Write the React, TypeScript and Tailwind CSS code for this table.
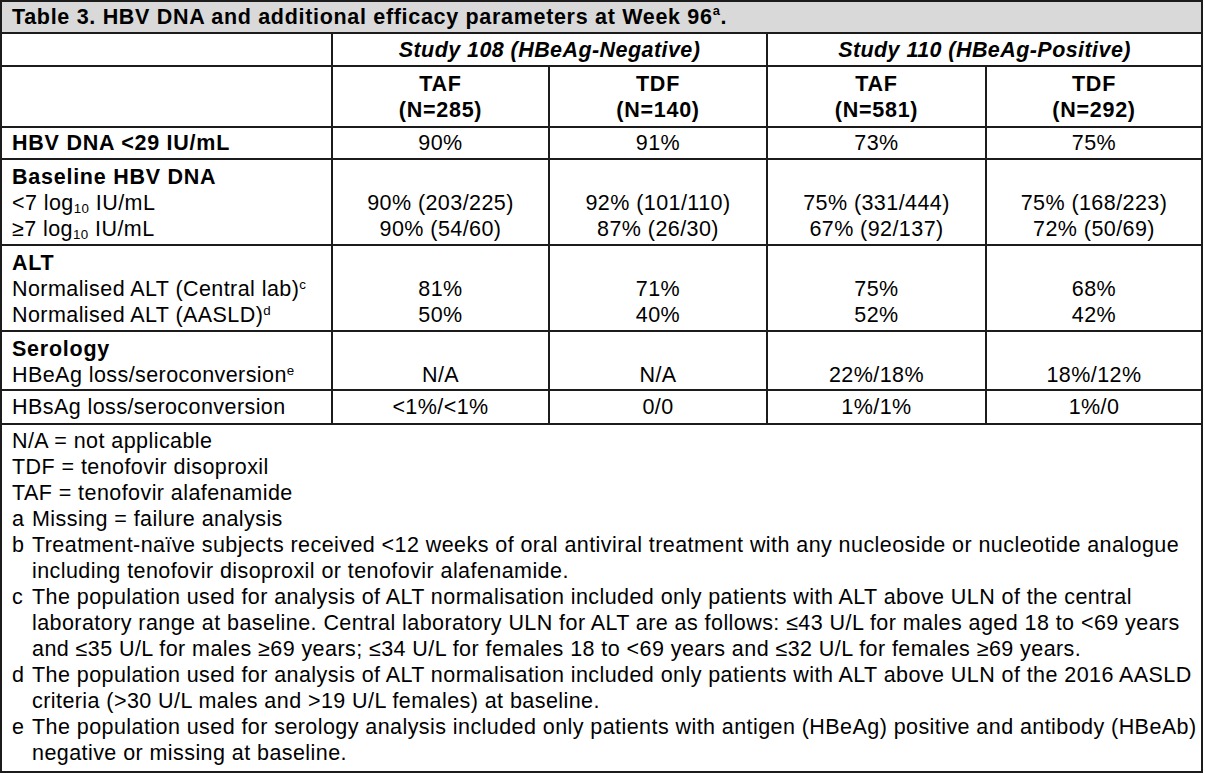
import type { ReactNode } from 'react'

const font = { fontFamily: '"Liberation Sans", Arial, sans-serif' }

type Row = {
  label: ReactNode[]
  values: string[][]
  height: string
}

const rows: Row[] = [
  {
    label: [<span className="font-bold tracking-[0.035em]">HBV DNA &lt;29 IU/mL</span>],
    values: [['90%'], ['91%'], ['73%'], ['75%']],
    height: 'single'
  },
  {
    label: [
      <span className="font-bold tracking-[0.035em]">Baseline HBV DNA</span>,
      <span>&lt;7 log<sub className="text-[0.62em]">10</sub> IU/mL</span>,
      <span>≥7 log<sub className="text-[0.62em]">10</sub> IU/mL</span>
    ],
    values: [
      ['', '90% (203/225)', '90% (54/60)'],
      ['', '92% (101/110)', '87% (26/30)'],
      ['', '75% (331/444)', '67% (92/137)'],
      ['', '75% (168/223)', '72% (50/69)']
    ],
    height: 'multi'
  },
  {
    label: [
      <span className="font-bold tracking-[0.035em]">ALT</span>,
      <span>Normalised ALT (Central lab)<sup className="text-[0.62em]">c</sup></span>,
      <span>Normalised ALT (AASLD)<sup className="text-[0.62em]">d</sup></span>
    ],
    values: [
      ['', '81%', '50%'],
      ['', '71%', '40%'],
      ['', '75%', '52%'],
      ['', '68%', '42%']
    ],
    height: 'multi'
  },
  {
    label: [
      <span className="font-bold tracking-[0.035em]">Serology</span>,
      <span>HBeAg loss/seroconversion<sup className="text-[0.62em]">e</sup></span>
    ],
    values: [
      ['', 'N/A'],
      ['', 'N/A'],
      ['', '22%/18%'],
      ['', '18%/12%']
    ],
    height: 'multi'
  },
  {
    label: [<span>HBsAg loss/seroconversion</span>],
    values: [['<1%/<1%'], ['0/0'], ['1%/1%'], ['1%/0']],
    height: 'single'
  }
]

const notes: { tag?: string; lines: string[] }[] = [
  { lines: ['N/A = not applicable'] },
  { lines: ['TDF = tenofovir disoproxil'] },
  { lines: ['TAF = tenofovir alafenamide'] },
  { tag: 'a', lines: ['Missing = failure analysis'] },
  {
    tag: 'b',
    lines: [
      'Treatment-naïve subjects received <12 weeks of oral antiviral treatment with any nucleoside or nucleotide analogue',
      'including tenofovir disoproxil or tenofovir alafenamide.'
    ]
  },
  {
    tag: 'c',
    lines: [
      'The population used for analysis of ALT normalisation included only patients with ALT above ULN of the central',
      'laboratory range at baseline. Central laboratory ULN for ALT are as follows: ≤43 U/L for males aged 18 to <69 years',
      'and ≤35 U/L for males ≥69 years; ≤34 U/L for females 18 to <69 years and ≤32 U/L for females ≥69 years.'
    ]
  },
  {
    tag: 'd',
    lines: [
      'The population used for analysis of ALT normalisation included only patients with ALT above ULN of the 2016 AASLD',
      'criteria (>30 U/L males and >19 U/L females) at baseline.'
    ]
  },
  {
    tag: 'e',
    lines: [
      'The population used for serology analysis included only patients with antigen (HBeAg) positive and antibody (HBeAb)',
      'negative or missing at baseline.'
    ]
  }
]

const arms = [
  ['TAF', '(N=285)'],
  ['TDF', '(N=140)'],
  ['TAF', '(N=581)'],
  ['TDF', '(N=292)']
]

export default function App() {
  return (
    <div className="bg-white text-black text-[21.5px] leading-[26px] tracking-[0.02em]" style={font}>
      <div className="grid w-[1203px] grid-cols-[329px_215px_216px_217px_214px] grid-rows-[30px_31px_59px_30px_84px_84px_57px_32px_346px] gap-[2px] border-2 border-[#1c1c1c] bg-[#1c1c1c]">
        {/* Title */}
        <div className="col-span-5 flex items-center bg-[#d9d9d9] px-[10px] font-bold tracking-[0.032em]">
          Table 3. HBV DNA and additional efficacy parameters at Week 96<sup className="text-[0.6em]">a</sup>.
        </div>

        {/* Study headers */}
        <div className="bg-white" />
        <div className="col-span-2 flex items-center justify-center bg-white font-bold italic">
          Study 108 (HBeAg-Negative)
        </div>
        <div className="col-span-2 flex items-center justify-center bg-white font-bold italic">
          Study 110 (HBeAg-Positive)
        </div>

        {/* Arms */}
        <div className="bg-white" />
        {arms.map(([name, n], i) => (
          <div key={i} className="flex flex-col items-center justify-center bg-white font-bold tracking-[0.035em]">
            <span>{name}</span>
            <span>{n}</span>
          </div>
        ))}

        {/* Data rows */}
        {rows.map((row, r) => (
          <div key={r} className="contents">
            <div
              className={`flex flex-col bg-white px-[10px] ${
                row.height === 'single' ? 'justify-center' : 'pt-[4px]'
              }`}
            >
              {row.label.map((l, i) => (
                <div key={i} className="whitespace-nowrap">{l}</div>
              ))}
            </div>
            {row.values.map((v, c) => (
              <div
                key={c}
                className={`flex flex-col items-center bg-white ${
                  row.height === 'single' ? 'justify-center' : 'pt-[4px]'
                }`}
              >
                {v.map((line, i) => (
                  <div key={i} className="h-[26px] whitespace-nowrap">{line}</div>
                ))}
              </div>
            ))}
          </div>
        ))}

        {/* Footnotes */}
        <div className="col-span-5 flex flex-col bg-white px-[10px] pt-[3px]">
          {notes.map((n, i) => (
            <div key={i} className="flex">
              {n.tag && <span className="w-[20px] shrink-0">{n.tag}</span>}
              <div className="flex flex-col">
                {n.lines.map((l, j) => (
                  <span key={j} className="whitespace-nowrap">{l}</span>
                ))}
              </div>
            </div>
          ))}
        </div>
      </div>
    </div>
  )
}
